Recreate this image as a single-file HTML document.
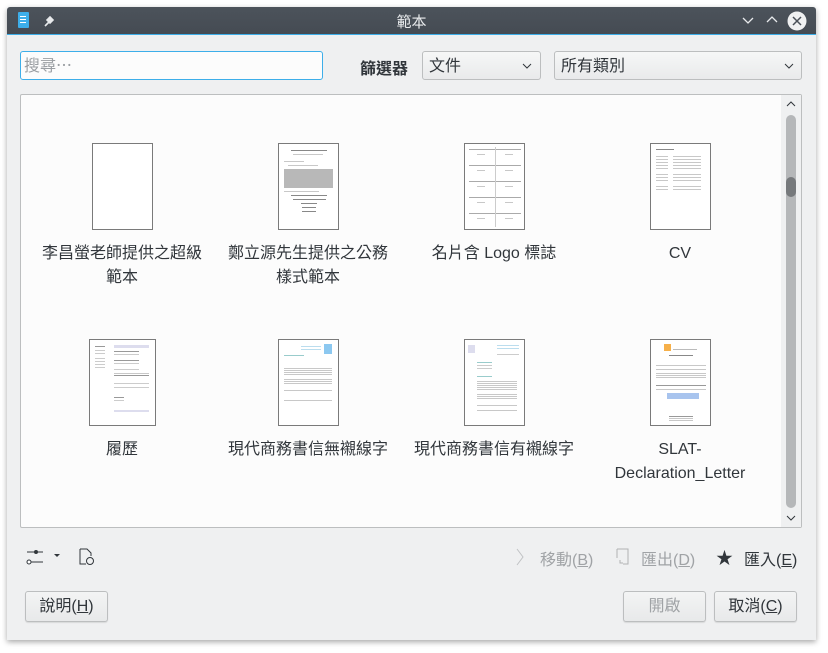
<!DOCTYPE html>
<html><head><meta charset="utf-8"><style>
*{margin:0;padding:0;box-sizing:border-box}
body{width:828px;height:653px;background:#fff;position:relative;overflow:hidden;font-family:"Liberation Sans","Noto Sans CJK TC",sans-serif;color:#31363b}
.win{position:absolute;left:7px;top:7px;width:809px;height:633px;background:#eff0f1;box-shadow:0 2px 6px rgba(0,0,0,.35);border-radius:3px 3px 0 0}
.tb{position:absolute;left:0;top:0;width:809px;height:28px;background:linear-gradient(#4c535b,#454b53);border-radius:3px 3px 0 0;border-bottom:1px solid #3daee9}
.tb .t{position:absolute;left:0;right:0;top:4px;text-align:center;color:#e8eaec;font-size:15px}
.a{position:absolute}
.inp{position:absolute;border:1px solid #bcbebf;border-radius:3px;background:linear-gradient(#f6f7f7,#e9eaeb);font-size:16px;padding:3px 6px 0;line-height:24px}
.lab{position:absolute;font-size:16px;text-align:center;width:180px;line-height:24px;color:#31363b}
.th{position:absolute;width:61px;height:87px;background:#fff;border:1px solid #7a7a7a}
.ln{position:absolute;height:1px;background:#c8c8c8}
.btn{position:absolute;height:31px;border:1px solid #bcbebf;border-radius:3px;background:linear-gradient(#f3f4f4,#e8e9ea);font-size:16px;text-align:center;line-height:29px;box-shadow:0 1px 1px rgba(0,0,0,.1)}
u{text-decoration:underline}
</style></head><body>
<div class="win">
 <div class="tb">
  <div class="a" style="left:11px;top:5px;width:11px;height:16px;background:#3daee9;border-radius:1px"></div>
  <div class="a" style="left:13px;top:9px;width:6px;height:1px;background:#fff;box-shadow:0 3px 0 #fff,0 6px 0 #fff"></div>
  <svg class="a" style="left:35px;top:7px" width="14" height="14"><path d="M3 12 L7 8 M6 4 L10 8 M8 3 L11 6 L8 9 L5 6Z" stroke="#e8eaec" stroke-width="1.6" fill="#e8eaec"/></svg>
  <div class="t">範本</div>
  <svg class="a" style="left:735px;top:9px" width="12" height="10"><path d="M1 2 L6 7 L11 2" stroke="#e8eaec" fill="none" stroke-width="1.3"/></svg>
  <svg class="a" style="left:759px;top:8px" width="12" height="10"><path d="M1 7 L6 2 L11 7" stroke="#e8eaec" fill="none" stroke-width="1.3"/></svg>
  <svg class="a" style="left:780px;top:4px" width="20" height="20"><circle cx="10" cy="10" r="9.5" fill="#eff0f1"/><path d="M6 6 L14 14 M14 6 L6 14" stroke="#4a5058" stroke-width="1.5"/></svg>
 </div>
 <div class="inp" style="left:13px;top:44px;width:303px;height:29px;background:#fcfcfc;border-color:#3daee9;color:#9a9ea2;padding:3px 3px 0">搜尋⋯</div>
 <div class="a" style="left:353px;top:48px;font-size:16px;font-weight:bold">篩選器</div>
 <div class="inp" style="left:415px;top:44px;width:119px;height:29px">文件</div>
 <svg class="a" style="left:515px;top:55px" width="10" height="8"><path d="M1 2 L5 6 L9 2" stroke="#31363b" fill="none"/></svg>
 <div class="inp" style="left:547px;top:44px;width:248px;height:29px">所有類別</div>
 <svg class="a" style="left:777px;top:55px" width="10" height="8"><path d="M1 2 L5 6 L9 2" stroke="#31363b" fill="none"/></svg>

 <div class="a" style="left:13px;top:87px;width:782px;height:434px;background:#fcfcfc;border:1px solid #bcbebf;border-radius:2px">
  <div class="a" style="right:0;top:0;width:20px;height:432px;background:#eff0f1"></div>
  <svg class="a" style="right:5px;top:5px" width="10" height="8"><path d="M1 6 L5 2 L9 6" stroke="#31363b" fill="none"/></svg>
  <svg class="a" style="right:5px;top:419px" width="10" height="8"><path d="M1 2 L5 6 L9 2" stroke="#31363b" fill="none"/></svg>
  <div class="a" style="left:765px;top:20px;width:10px;height:393px;background:#b5b7b9;border-radius:5px"></div>
  <div class="a" style="left:765px;top:82px;width:10px;height:20px;background:#76797c;border-radius:5px"></div>
 </div>
</div>

<div class="th" style="left:92px;top:143px"></div>
<div class="th" style="left:278px;top:143px">
 <div class="ln" style="left:12px;top:6px;width:36px;background:#888"></div>
 <div class="ln" style="left:14px;top:10px;width:30px"></div>
 <div class="ln" style="left:5px;top:17px;width:20px"></div>
 <div class="ln" style="left:9px;top:21px;width:30px"></div>
 <div class="a" style="left:5px;top:25px;width:49px;height:19px;background:#b8b8b8"></div>
 <div class="ln" style="left:5px;top:47px;width:35px"></div>
 <div class="ln" style="left:12px;top:51px;width:36px;background:#888"></div>
 <div class="ln" style="left:14px;top:55px;width:33px;background:#888"></div>
 <div class="ln" style="left:22px;top:59px;width:16px;background:#888"></div>
 <div class="ln" style="left:23px;top:63px;width:14px;background:#888"></div>
 <div class="ln" style="left:23px;top:67px;width:14px;background:#888"></div>
</div>
<div class="th" style="left:464px;top:143px">
 <div class="ln" style="left:4px;top:5px;width:52px;background:#aaa;box-shadow:0 16px 0 #aaa,0 32px 0 #aaa,0 48px 0 #aaa,0 64px 0 #aaa"></div>
 <div class="a" style="left:30px;top:3px;width:1px;height:80px;background:#ccc"></div>
 <div class="ln" style="left:12px;top:10px;width:8px;box-shadow:0 16px 0 #c8c8c8,0 32px 0 #c8c8c8,0 48px 0 #c8c8c8,0 64px 0 #c8c8c8"></div>
 <div class="ln" style="left:40px;top:10px;width:8px;box-shadow:0 16px 0 #c8c8c8,0 32px 0 #c8c8c8,0 48px 0 #c8c8c8,0 64px 0 #c8c8c8"></div>
</div>
<div class="th" style="left:650px;top:143px">
 <div class="ln" style="left:5px;top:5px;width:18px;background:#888"></div>
 <div class="ln" style="left:5px;top:12px;width:12px;box-shadow:0 3px 0 #c8c8c8,0 6px 0 #c8c8c8,0 9px 0 #c8c8c8,0 12px 0 #c8c8c8,0 18px 0 #c8c8c8,0 21px 0 #c8c8c8,0 24px 0 #c8c8c8,0 30px 0 #c8c8c8,0 33px 0 #c8c8c8"></div>
 <div class="ln" style="left:22px;top:12px;width:28px;box-shadow:0 3px 0 #c8c8c8,0 6px 0 #c8c8c8,0 9px 0 #c8c8c8,0 12px 0 #c8c8c8,0 18px 0 #c8c8c8,0 21px 0 #c8c8c8,0 24px 0 #c8c8c8,0 30px 0 #c8c8c8,0 33px 0 #c8c8c8"></div>
</div>
<div class="th" style="left:89px;top:339px;width:67px">
 <div class="ln" style="left:5px;top:6px;width:10px;background:#999;box-shadow:0 4px 0 #ccc,0 7px 0 #ccc,0 12px 0 #ccc,0 15px 0 #ccc,0 18px 0 #ccc,0 21px 0 #ccc"></div>
 <div class="a" style="left:24px;top:5px;width:35px;height:3px;background:#dde"></div>
 <div class="ln" style="left:24px;top:11px;width:25px;background:#999;box-shadow:0 3px 0 #ccc,0 9px 0 #999,0 12px 0 #ccc,0 18px 0 #ccc"></div>
 <div class="ln" style="left:24px;top:33px;width:35px;box-shadow:0 2px 0 #999,0 10px 0 #ccc,0 14px 0 #ccc"></div>
 <div class="ln" style="left:24px;top:57px;width:10px;background:#999;box-shadow:0 3px 0 #ccc"></div>
 <div class="a" style="left:24px;top:70px;width:35px;height:2px;background:#dde"></div>
</div>
<div class="th" style="left:278px;top:339px">
 <div class="a" style="left:45px;top:4px;width:8px;height:10px;background:#8cc8f0"></div>
 <div class="ln" style="left:22px;top:6px;width:20px;background:#bde;box-shadow:0 3px 0 #bde"></div>
 <div class="ln" style="left:5px;top:15px;width:20px;background:#9cc"></div>
 <div class="ln" style="left:5px;top:28px;width:48px;box-shadow:0 2px 0 #c8c8c8,0 4px 0 #c8c8c8,0 6px 0 #c8c8c8,0 11px 0 #c8c8c8,0 13px 0 #c8c8c8,0 15px 0 #c8c8c8,0 22px 0 #c8c8c8,0 32px 0 #c8c8c8"></div>
</div>
<div class="th" style="left:464px;top:339px">
 <div class="a" style="left:3px;top:5px;width:7px;height:8px;background:#dde"></div>
 <div class="ln" style="left:32px;top:5px;width:22px;background:#bde;box-shadow:0 3px 0 #bde,0 9px 0 #ccc"></div>
 <div class="ln" style="left:12px;top:22px;width:15px;background:#9cc;box-shadow:0 3px 0 #ccc,0 6px 0 #ccc,0 14px 0 #9cc"></div>
 <div class="ln" style="left:12px;top:41px;width:40px;box-shadow:0 2px 0 #c8c8c8,0 4px 0 #c8c8c8,0 6px 0 #c8c8c8,0 8px 0 #c8c8c8,0 13px 0 #c8c8c8,0 15px 0 #c8c8c8,0 17px 0 #c8c8c8,0 24px 0 #c8c8c8,0 29px 0 #c8c8c8"></div>
</div>
<div class="th" style="left:650px;top:339px">
 <div class="a" style="left:13px;top:4px;width:7px;height:7px;background:#f6b04a"></div>
 <div class="ln" style="left:22px;top:9px;width:24px;background:#bbb"></div>
 <div class="ln" style="left:18px;top:15px;width:24px;background:#888"></div>
 <div class="ln" style="left:5px;top:25px;width:50px;box-shadow:0 4px 0 #c8c8c8,0 8px 0 #c8c8c8,0 10px 0 #c8c8c8,0 12px 0 #c8c8c8,0 20px 0 #999,0 24px 0 #c8c8c8"></div>
 <div class="a" style="left:16px;top:53px;width:32px;height:6px;background:#a8c4ee"></div>
 <div class="ln" style="left:18px;top:76px;width:24px;background:#999;box-shadow:0 2px 0 #c8c8c8,0 4px 0 #c8c8c8"></div>
</div>

<div class="lab" style="left:32px;top:242px">李昌螢老師提供之超級<br>範本</div>
<div class="lab" style="left:218px;top:242px">鄭立源先生提供之公務<br>樣式範本</div>
<div class="lab" style="left:404px;top:242px">名片含 Logo 標誌</div>
<div class="lab" style="left:590px;top:242px">CV</div>
<div class="lab" style="left:32px;top:438px">履歷</div>
<div class="lab" style="left:218px;top:438px">現代商務書信無襯線字</div>
<div class="lab" style="left:404px;top:438px">現代商務書信有襯線字</div>
<div class="lab" style="left:590px;top:438px">SLAT-<br>Declaration_Letter</div>

<svg class="a" style="left:24px;top:546px" width="40" height="22"><path d="M3 6 H19 M3 16 H19" stroke="#31363b"/><circle cx="12" cy="6" r="2" fill="#31363b"/><circle cx="5" cy="16" r="2" fill="#fff" stroke="#31363b"/><path d="M30 8 L36 8 L33 11Z" fill="#31363b"/></svg>
<svg class="a" style="left:78px;top:548px" width="18" height="18"><path d="M2 1 H9 L13 5 V8 M2 1 V16 H8" stroke="#31363b" fill="none"/><circle cx="12" cy="13" r="3.5" stroke="#31363b" fill="none"/></svg>
<svg class="a" style="left:515px;top:548px" width="10" height="18"><path d="M2 1 L8 9 L2 17" stroke="#c0c2c4" fill="none"/></svg>
<div class="a" style="left:540px;top:546px;font-size:16px;color:#a0a3a6">移動(<u>B</u>)</div>
<svg class="a" style="left:615px;top:548px" width="16" height="18"><path d="M2 1 H13 V16 H8 M2 1 V10 M5 12 V15 H8" stroke="#b0b2b4" fill="none"/></svg>
<div class="a" style="left:641px;top:546px;font-size:16px;color:#a0a3a6">匯出(<u>D</u>)</div>
<div class="a" style="left:716px;top:544px;font-size:17px">★</div>
<div class="a" style="left:744px;top:546px;font-size:16px">匯入(<u>E</u>)</div>

<div class="btn" style="left:25px;top:591px;width:83px">說明(<u>H</u>)</div>
<div class="btn" style="left:623px;top:591px;width:83px;color:#a0a3a6">開啟</div>
<div class="btn" style="left:714px;top:591px;width:83px">取消(<u>C</u>)</div>
</body></html>
